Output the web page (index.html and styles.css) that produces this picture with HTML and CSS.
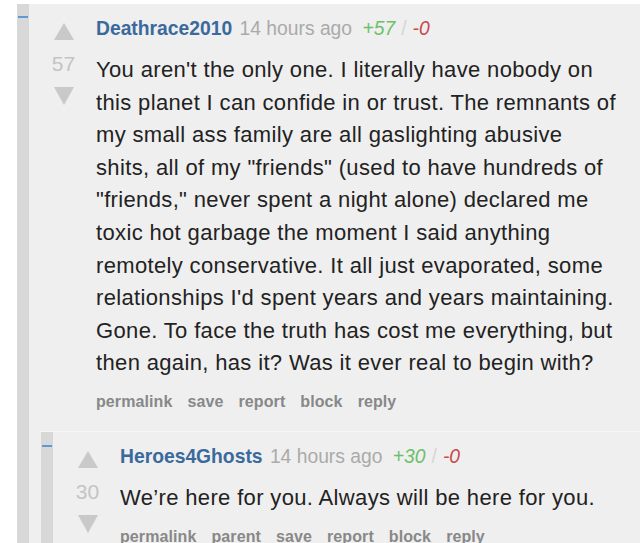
FILE: index.html
```html
<!DOCTYPE html>
<html lang="en">
    <head>
        <meta charset="UTF-8">
        <meta name="viewport" content="width=device-width, initial-scale=1.0">
        <title>Comments</title>
        <link rel="stylesheet" href="styles.css">
    </head>

    <body>
        <div class="thread">
            <div class="comment">
                <div class="strip"><span class="collapse"></span></div>
                <div class="comment-main">
                    <div class="entry">
                        <div class="votes">
                            <span class="arrow up"></span>
                            <span class="score">57</span>
                            <span class="arrow down"></span>
                        </div>
                        <div class="content">
                            <p class="tagline">
                                <a class="author" href="#">Deathrace2010</a>
                                <span class="time">14 hours ago</span>
                                <span class="plus">+57</span><span class="slash">/</span><span class="minus">-0</span>
                            </p>
                            <p class="text">You aren't the only one. I literally have nobody on this planet I can confide in or trust. The remnants of my small ass family are all gaslighting abusive shits, all of my "friends" (used to have hundreds of "friends," never spent a night alone) declared me toxic hot garbage the moment I said anything remotely conservative. It all just evaporated, some relationships I'd spent years and years maintaining. Gone. To face the truth has cost me everything, but then again, has it? Was it ever real to begin with?</p>
                            <ul class="buttons">
                                <li>permalink</li>
                                <li>save</li>
                                <li>report</li>
                                <li>block</li>
                                <li>reply</li>
                            </ul>
                        </div>
                    </div>

                    <div class="children">
                        <div class="comment child">
                            <div class="strip"><span class="collapse"></span></div>
                            <div class="comment-main">
                                <div class="entry">
                                    <div class="votes">
                                        <span class="arrow up"></span>
                                        <span class="score">30</span>
                                        <span class="arrow down"></span>
                                    </div>
                                    <div class="content">
                                        <p class="tagline">
                                            <a class="author" href="#">Heroes4Ghosts</a>
                                            <span class="time">14 hours ago</span>
                                            <span class="plus">+30</span><span class="slash">/</span><span class="minus">-0</span>
                                        </p>
                                        <p class="text">We’re here for you. Always will be here for you.</p>
                                        <ul class="buttons">
                                            <li>permalink</li>
                                            <li>parent</li>
                                            <li>save</li>
                                            <li>report</li>
                                            <li>block</li>
                                            <li>reply</li>
                                        </ul>
                                    </div>
                                </div>
                            </div>
                        </div>
                    </div>
                </div>
            </div>
        </div>
    </body>
</html>
```

FILE: styles.css
```css
body {
    margin: 0;
    background: #fff;
    font-family: "Liberation Sans", Arial, sans-serif;
    overflow: hidden;
}

.thread {
    padding: 4px 0 0 17px;
}

.comment {
    display: flex;
    background: #efefef;
}

.strip {
    width: 12px;
    flex-shrink: 0;
    background: #d8d8d8;
    position: relative;
}

.collapse {
    position: absolute;
    top: 12px;
    left: 1px;
    width: 10px;
    height: 2px;
    background: #5e9ad0;
}

.comment-main {
    flex: 1;
}

.entry {
    display: flex;
    padding-left: 24px;
}

.votes {
    width: 21px;
    padding-top: 19px;
    display: flex;
    flex-direction: column;
    align-items: center;
}

.arrow {
    width: 0;
    height: 0;
    border-left: 10.5px solid transparent;
    border-right: 10.5px solid transparent;
}

.arrow.up {
    border-bottom: 17px solid #c9c9c9;
}

.arrow.down {
    border-top: 18px solid #c9c9c9;
}

.score {
    font-size: 21px;
    line-height: 24px;
    color: #c4c4c4;
    margin: 12px 0 11px;
}

.content {
    flex: 1;
    margin-left: 22px;
    padding-top: 13px;
}

.tagline {
    margin: 0;
    font-size: 19.3px;
    line-height: 24px;
    color: #aaa;
}

.author {
    color: #3a6a9c;
    font-weight: bold;
    text-decoration: none;
    margin-right: 2px;
}

.plus,
.minus {
    font-style: italic;
}

.plus {
    margin-left: 5px;
    color: #6cc06a;
}

.slash {
    color: #d6d6d6;
    margin: 0 6px;
}

.minus {
    color: #c9484b;
}

.text {
    margin: 13px 0 0;
    max-width: 526px;
    font-size: 22px;
    letter-spacing: 0.35px;
    line-height: 32.6px;
    color: #222;
}

.buttons {
    list-style: none;
    margin: 12px 0 0;
    padding: 0;
    display: flex;
    gap: 15px;
    font-size: 16px;
    letter-spacing: 0.1px;
    line-height: 20px;
    font-weight: bold;
    color: #888;
}

.children {
    margin: 19px 0 0 12px;
}

.child {
    border-top: 1px solid #f7f7f7;
}

.child .collapse {
    top: 13px;
}
```
